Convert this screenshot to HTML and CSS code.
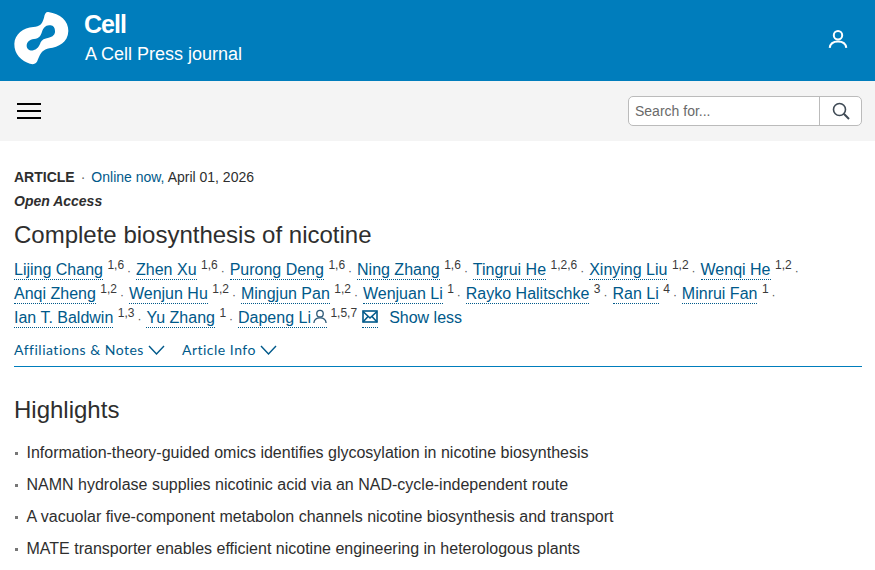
FILE: index.html
```html
<!DOCTYPE html>
<html lang="en">
<head>
<meta charset="utf-8">
<title>Complete biosynthesis of nicotine</title>
<link rel="stylesheet" href="styles.css">
</head>
<body>
<header class="masthead">
  <a class="brand" href="#">
    <svg class="logo" viewBox="9 7 171 183" width="57" height="61" aria-hidden="true">
      <path fill="#fff" fill-rule="evenodd" d="M115 13C150 18 176 40 175 70C174 105 145 118 118 122C100 125 92 135 84 155C80 168 72 172 60 168C35 160 12 140 13 108C14 80 40 60 70 58C90 56 96 50 102 30C104 18 108 12 115 13ZM122 53C108 50 100 60 96 72C92 84 88 92 72 94C58 96 50 104 50 114C50 124 60 131 70 128C82 125 88 116 92 104C95 96 104 92 116 90C128 88 136 80 135 70C135 60 130 54 122 53Z"/>
    </svg>
    <span class="brand-text">
      <span class="brand-name">Cell</span>
      <span class="brand-sub">A Cell Press journal</span>
    </span>
  </a>
  <a class="account" href="#" aria-label="Account">
    <svg viewBox="0 0 20 20" width="20" height="20" fill="none" stroke="#fff" stroke-width="2" aria-hidden="true">
      <circle cx="10" cy="6.2" r="4.2"/>
      <path d="M1.7 18.8C2.2 14.6 5.6 12.4 10 12.4C14.4 12.4 17.8 14.6 18.3 18.8"/>
    </svg>
  </a>
</header>
<nav class="toolbar">
  <button class="burger" aria-label="Menu"><span></span><span></span><span></span></button>
  <form class="search">
    <input class="search-input" type="text" placeholder="Search for...">
    <button class="search-btn" type="button" aria-label="Search">
      <svg viewBox="0 0 18 18" width="18" height="18" fill="none" stroke="#3f4a55" stroke-width="1.6" aria-hidden="true">
        <circle cx="7.5" cy="7.5" r="6"/>
        <path d="M11.8 11.8L17 17" stroke-width="2"/>
      </svg>
    </button>
  </form>
</nav>
<main class="article">
  <div class="meta"><strong>ARTICLE</strong><span class="dot">·</span><span class="online">Online now, </span>April 01, 2026</div>
  <div class="open-access">Open Access</div>
  <h1>Complete biosynthesis of nicotine</h1>
  <ul class="authors">
    <li><a href="#">Lijing Chang</a> <sup>1,6</sup></li>
    <li><a href="#">Zhen Xu</a> <sup>1,6</sup></li>
    <li><a href="#">Purong Deng</a> <sup>1,6</sup></li>
    <li><a href="#">Ning Zhang</a> <sup>1,6</sup></li>
    <li><a href="#">Tingrui He</a> <sup>1,2,6</sup></li>
    <li><a href="#">Xinying Liu</a> <sup>1,2</sup></li>
    <li><a href="#">Wenqi He</a> <sup>1,2</sup></li>
    <li><a href="#">Anqi Zheng</a> <sup>1,2</sup></li>
    <li><a href="#">Wenjun Hu</a> <sup>1,2</sup></li>
    <li><a href="#">Mingjun Pan</a> <sup>1,2</sup></li>
    <li><a href="#">Wenjuan Li</a> <sup>1</sup></li>
    <li><a href="#">Rayko Halitschke</a> <sup>3</sup></li>
    <li><a href="#">Ran Li</a> <sup>4</sup></li>
    <li><a href="#">Minrui Fan</a> <sup>1</sup></li>
    <li><a href="#">Ian T. Baldwin</a> <sup>1,3</sup></li>
    <li><a href="#">Yu Zhang</a> <sup>1</sup></li>
    <li class="last"><a href="#">Dapeng Li<svg class="person" viewBox="0 0 16 16" width="14" height="15" fill="none" stroke="#2d5a78" stroke-width="1.5" aria-hidden="true"><circle cx="8" cy="4.8" r="3.7"/><path d="M1 15.5C1.3 11.5 4.4 9.6 8 9.6C11.6 9.6 14.7 11.5 15 15.5"/></svg></a> <sup class="corresponding">1,5,7</sup><a class="mail" href="#" aria-label="Email"><svg viewBox="0 0 16 13" width="16" height="13" fill="none" stroke="#00598a" stroke-width="1.6" aria-hidden="true"><rect x="1" y="1" width="14" height="11"/><path d="M1 1.5L8 8L15 1.5M1 12L6 6.5M15 12L10 6.5"/></svg></a><a class="less" href="#">Show less</a></li>
  </ul>
  <div class="tabs">
    <button class="tab" type="button">Affiliations &amp; Notes<svg viewBox="0 0 17 10" width="17" height="10" fill="none" stroke="#00598a" stroke-width="1.4" aria-hidden="true"><path d="M1 1L8.5 9L16 1"/></svg></button>
    <button class="tab" type="button">Article Info<svg viewBox="0 0 17 10" width="17" height="10" fill="none" stroke="#00598a" stroke-width="1.4" aria-hidden="true"><path d="M1 1L8.5 9L16 1"/></svg></button>
  </div>
  <h2>Highlights</h2>
  <ul class="highlights">
    <li>Information-theory-guided omics identifies glycosylation in nicotine biosynthesis</li>
    <li>NAMN hydrolase supplies nicotinic acid via an NAD-cycle-independent route</li>
    <li>A vacuolar five-component metabolon channels nicotine biosynthesis and transport</li>
    <li>MATE transporter enables efficient nicotine engineering in heterologous plants</li>
  </ul>
</main>
</body>
</html>
```
FILE: styles.css
```css
* { box-sizing: border-box; }
html, body { margin: 0; padding: 0; }
body {
  font-family: "Liberation Sans", Arial, sans-serif;
  font-size: 16px;
  color: #2e2e2e;
  background: #fff;
  overflow: hidden;
  height: 570px;
}
a { text-decoration: none; color: inherit; }
button { font: inherit; background: none; border: 0; padding: 0; }

.masthead {
  height: 81px;
  background: #007dbc;
  color: #fff;
  display: flex;
  justify-content: space-between;
  align-items: center;
  padding: 0 27px 0 13px;
}
.brand { display: flex; align-items: center; gap: 14px; }
.logo { display: block; }
.brand-text { display: flex; flex-direction: column; margin-top: -1px; }
.brand-name { font-size: 25px; line-height: 26px; font-weight: 700; letter-spacing: -1px; }
.brand-sub { font-size: 18px; line-height: 30px; margin: 2px 0 0 1px; }
.account { display: block; height: 20px; margin-top: -3px; }

.toolbar {
  height: 60px;
  background: #f4f4f4;
  display: flex;
  justify-content: space-between;
  align-items: center;
  padding: 0 13px 0 17px;
}
.burger { display: flex; flex-direction: column; gap: 5px; width: 24px; margin-top: -1px; }
.burger span { display: block; height: 2px; background: #000; }
.search { display: flex; width: 234px; height: 30px; background: #fff; border: 1px solid #bbb; border-radius: 5px; }
.search-input {
  flex: 1;
  min-width: 0;
  border: 0;
  background: none;
  padding: 0 6px;
  font: 14px "Liberation Sans", Arial, sans-serif;
  outline: none;
}
.search-input::placeholder { color: #6a6a6a; opacity: 1; }
.search-btn { width: 42px; border-left: 1px solid #bbb; display: flex; align-items: center; justify-content: center; }

.article { padding: 26px 13px 0 14px; }
.meta { font-size: 14px; line-height: 20px; }
.meta strong { font-weight: 700; }
.dot { margin: 0 6px; color: #666; }
.online { color: #00598a; }
.open-access { font-size: 14px; line-height: 20px; font-weight: 700; font-style: italic; margin-top: 4px; }
h1 { font-size: 24px; line-height: 30px; font-weight: 400; margin: 9px 0 0; color: #2e2e2e; }

.authors { list-style: none; margin: 8px 0 0; padding: 0; line-height: 24px; }
.authors li { display: inline-block; white-space: nowrap; }
.authors li:not(.last)::after { content: "·"; margin: 0 .5px 0 3px; color: #555; font-size: 12px; line-height: 0; }
.authors a { color: #00598a; border-bottom: 1px dotted #00598a; padding-bottom: 1px; }
.authors sup { font-size: 12px; line-height: 0; vertical-align: 6px; color: #3a3a3a; }
.authors .corresponding { margin-left: -1px; }
.person { vertical-align: -1px; margin-left: 2px; }
.authors .mail { border-bottom: 1px dotted #00598a; margin-left: 5px; }
.authors .less { border: 0; margin-left: 11px; }

.tabs { display: flex; gap: 17px; margin-top: 5px; height: 32px; border-bottom: 1px solid #007dbc; }
.tab {
  font-family: Lato, "Open Sans", sans-serif;
  font-size: 14px;
  line-height: 20px;
  letter-spacing: .5px;
  color: #00598a;
  height: 20px;
  margin-top: 5px;
  display: flex;
  align-items: center;
  gap: 4px;
}

h2 { font-size: 24px; line-height: 30px; font-weight: 400; margin: 28px 0 0; color: #2e2e2e; }
.highlights { list-style: none; margin: 17px 0 0; padding: 0; }
.highlights li { position: relative; padding-left: 12.5px; line-height: 22px; margin-bottom: 10px; }
.highlights li::before { content: ""; position: absolute; left: 1px; top: 10px; width: 3px; height: 3px; background: #777; }
```
